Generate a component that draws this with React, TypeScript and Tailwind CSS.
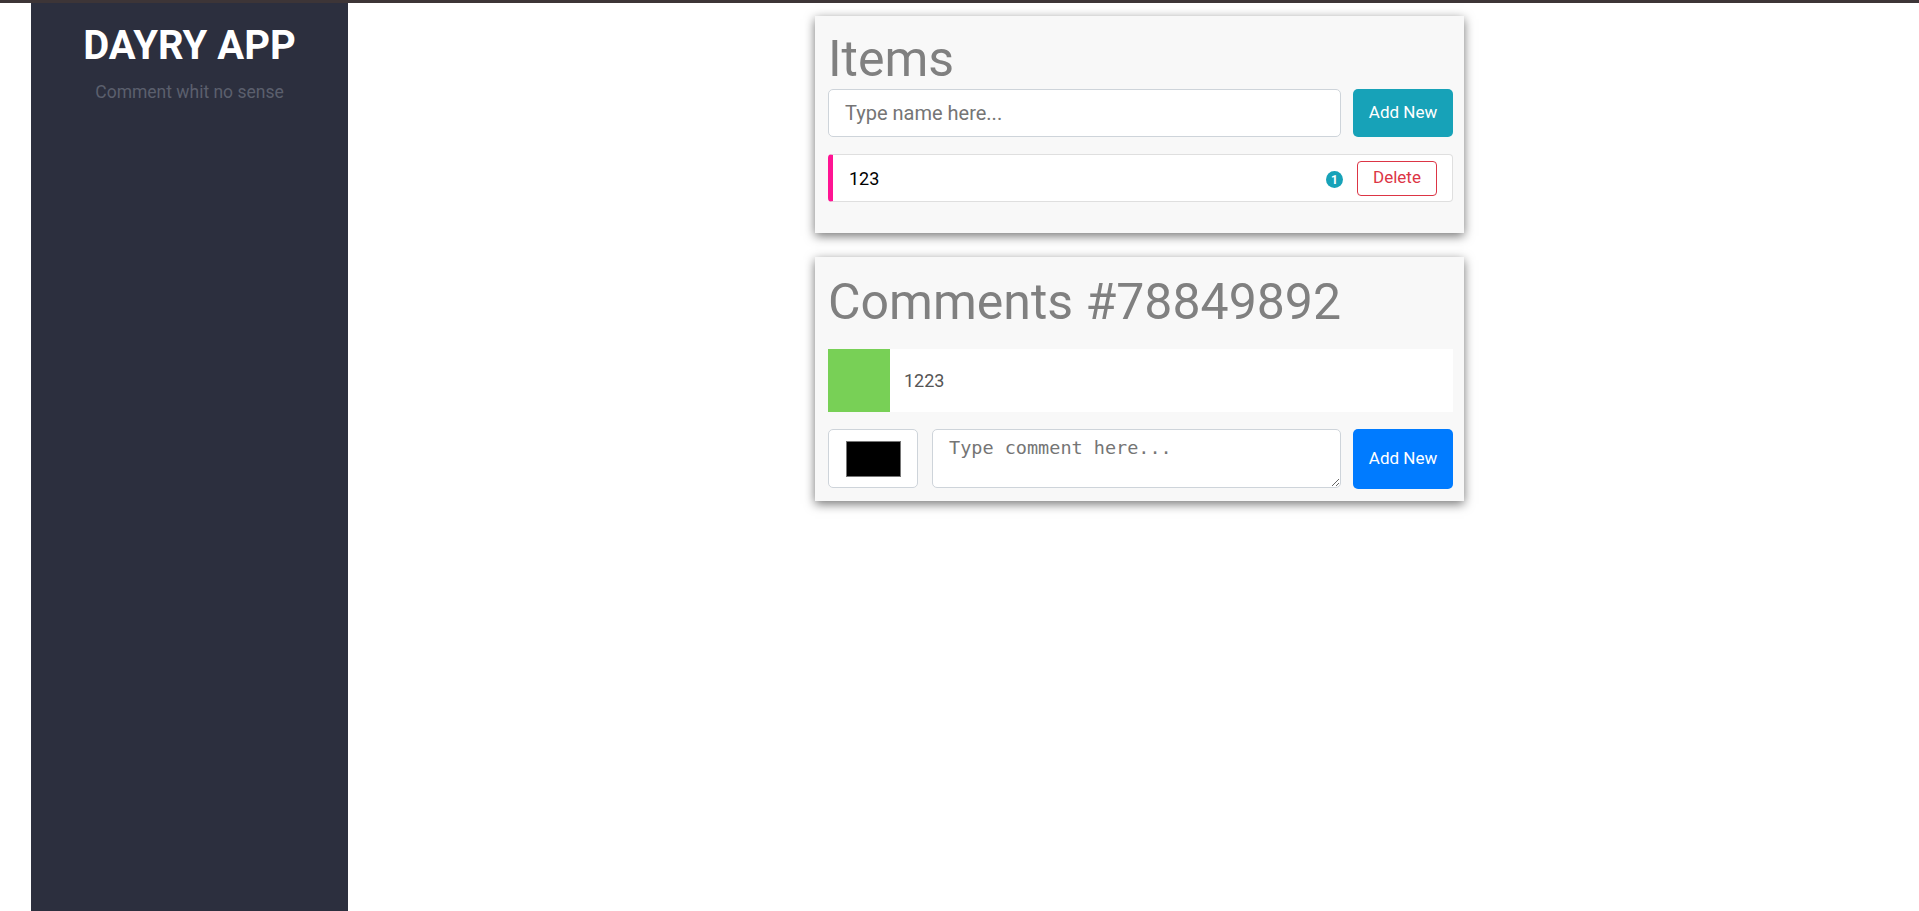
import React, { useState } from 'react'

const font = { fontFamily: 'Roboto, "Liberation Sans", sans-serif' }

export default function App() {
  const [name, setName] = useState('')
  const [comment, setComment] = useState('')

  return (
    <div className="min-h-screen flex flex-col bg-white" style={font}>
      <div className="h-[3px] bg-[#3d3537]" />
      <div className="flex flex-1">
        <div className="w-[31px]" />
        <aside className="w-[317px] bg-[#2c2f3e] pt-[19px] text-center">
          <h1 className="text-[40px] leading-[48px] font-bold text-white">DAYRY APP</h1>
          <p className="mt-[9px] text-[17.5px] leading-[27px] text-[#5b5f6d]">Comment whit no sense</p>
        </aside>
        <main className="flex-1 pl-[12px] flex flex-col items-center pt-[13px] gap-[24px]">
          <section className="w-[649px] bg-[#f8f8f8] shadow-[0_3px_10px_rgba(0,0,0,0.55)] pl-[13px] pr-[11px] pt-[13px] pb-[31px]">
            <h2 className="text-[50px] leading-[60px] h-[60px] text-[#808080]">Items</h2>
            <div className="flex gap-[12px]">
              <input
                value={name}
                onChange={e => setName(e.target.value)}
                placeholder="Type name here..."
                className="flex-1 h-[48px] bg-white border border-[#ced4da] rounded-[5px] px-[16px] text-[20px] text-[#495057] placeholder:text-[#757575] outline-none"
              />
              <button className="w-[100px] h-[48px] rounded-[5px] bg-[#17a2b8] text-white text-[17px]">Add New</button>
            </div>
            <ul className="mt-[17px]">
              <li className="h-[48px] flex items-center bg-white border border-[#dfdfdf] border-l-[5px] border-l-[#ff1493] rounded-[4px] pl-[16px] pr-[15px]">
                <span className="flex-1 text-[18px] text-black">123</span>
                <span className="w-[17px] h-[17px] rounded-full bg-[#17a2b8] text-white text-[12px] leading-none font-bold flex items-center justify-center mt-[3px]">1</span>
                <button className="ml-[14px] w-[80px] h-[35px] border border-[#dc3545] rounded-[4px] text-[#dc3545] text-[17px]">Delete</button>
              </li>
            </ul>
          </section>

          <section className="w-[649px] bg-[#f8f8f8] shadow-[0_3px_10px_rgba(0,0,0,0.55)] pl-[13px] pr-[11px] pt-[15px] pb-[12px]">
            <h2 className="text-[50px] leading-[60px] h-[60px] text-[#808080]">Comments #78849892</h2>
            <div className="mt-[17px] h-[63px] flex items-center bg-white">
              <div className="w-[62px] h-full bg-[#78d056]" />
              <span className="pl-[14px] text-[18px] text-[#555555]">1223</span>
            </div>
            <div className="mt-[17px] flex">
              <div className="w-[90px] h-[59px] bg-white border border-[#ced4da] rounded-[5px] pl-[17px] pt-[11px]">
                <div className="w-[55px] h-[36px] bg-black border border-[#767676]" />
              </div>
              <textarea
                value={comment}
                onChange={e => setComment(e.target.value)}
                placeholder="Type comment here..."
                className="ml-[14px] flex-1 h-[59px] bg-white border border-[#ced4da] rounded-[5px] px-[16px] pt-[4px] text-[18.5px] leading-[27px] text-[#495057] placeholder:text-[#757575] outline-none"
                style={{ fontFamily: '"DejaVu Sans Mono", monospace' }}
              />
              <button className="ml-[12px] w-[100px] h-[60px] rounded-[5px] bg-[#007bff] text-white text-[17px]">Add New</button>
            </div>
          </section>
        </main>
      </div>
    </div>
  )
}
